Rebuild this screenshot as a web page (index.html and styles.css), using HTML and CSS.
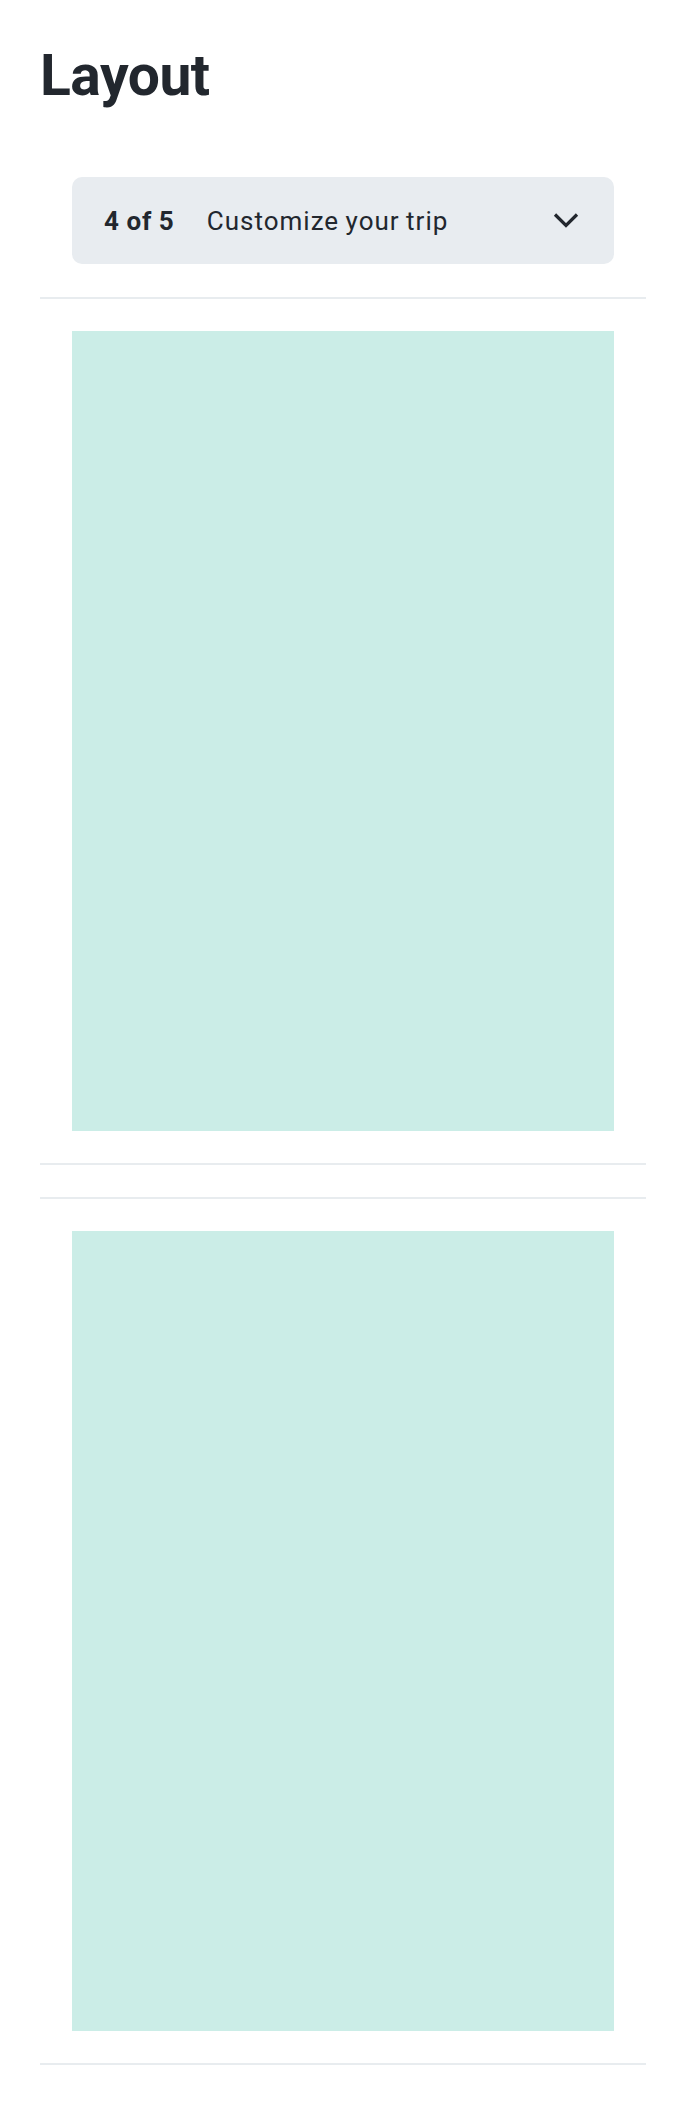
FILE: index.html
```html
<!DOCTYPE html>
<html lang="en">
  <head>
    <meta charset="UTF-8" />
    <meta name="viewport" content="width=device-width, initial-scale=1.0" />
    <title>Layout</title>
    <link rel="stylesheet" href="styles.css">
  </head>
  <body>
    <div class="page">
      <h1 class="page-title">Layout</h1>

      <div class="step-select">
        <span class="step-count">4 of 5</span>
        <span class="step-name">Customize your trip</span>
        <span class="step-toggle">
          <svg width="32" height="32" viewBox="0 0 32 32" fill="none" xmlns="http://www.w3.org/2000/svg">
            <path d="M5 9.5L16 20.5L27 9.5" stroke="#22272e" stroke-width="3.2" />
          </svg>
        </span>
      </div>

      <div class="panel">
        <div class="panel-body"></div>
      </div>

      <div class="panel">
        <div class="panel-body"></div>
      </div>
    </div>
  </body>
</html>
```

FILE: styles.css
```css
body {
  margin: 0;
  background: #ffffff;
  color: #22272e;
  font-family: Roboto, "Liberation Sans", sans-serif;
}

/* ページ全体 */
.page {
  padding: 42px 40px 0;
}

.page-title {
  margin: 0 0 67px;
  font-size: 57px;
  font-weight: 700;
  line-height: 1.2;
  letter-spacing: -0.5px;
}

/* ステップ選択 */
.step-select {
  margin: 0 32px 33px;
  padding: 25px 32px 23px;
  display: flex;
  flex-direction: row;
  align-items: center;
  background-color: #e8ecf0;
  border-radius: 10px;
  font-size: 26px;
  line-height: 39px;
  letter-spacing: 1px;
  word-spacing: -1px;
}

.step-count {
  font-weight: 700;
  margin-right: 32px;
}

.step-name {
  flex: 1;
}

.step-toggle {
  display: flex;
  margin-top: -2px;
  cursor: pointer;
}

/* パネル */
.panel {
  border-top: 2px solid #e8ecef;
  border-bottom: 2px solid #e8ecef;
  padding: 32px;
  margin-bottom: 32px;
}

.panel-body {
  height: 800px;
  background-color: #cbede7;
}
```
